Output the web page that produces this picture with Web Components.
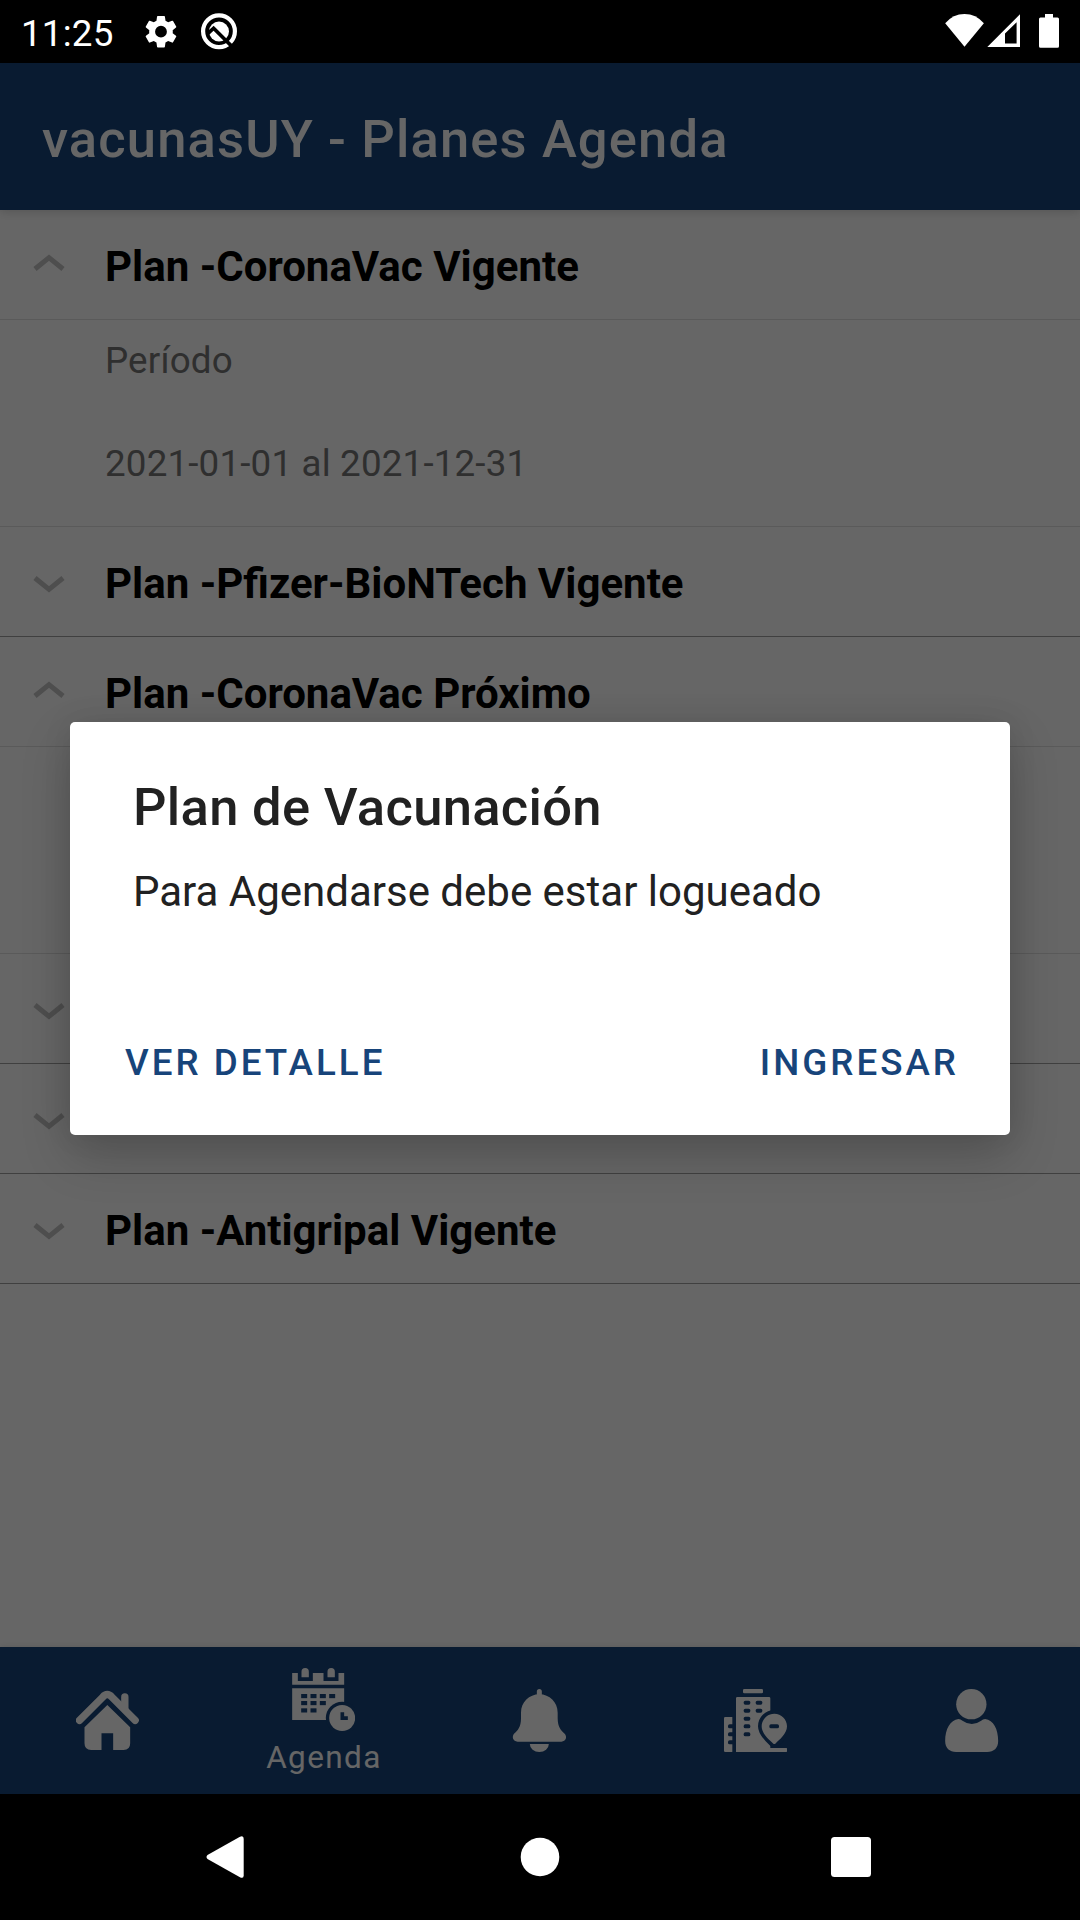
<!DOCTYPE html>
<html lang="es">
<head>
<meta charset="utf-8">
<title>vacunasUY</title>
<style>
  html, body { margin: 0; background: #000; }
  body { font-family: Roboto, "Liberation Sans", sans-serif; }
</style>
</head>
<body>
<app-shell>
  <status-bar slot="status">11:25</status-bar>
  <app-bar>vacunasUY - Planes Agenda</app-bar>
  <plan-list>
    <plan-group open><span slot="name">Plan -CoronaVac Vigente</span><span slot="label">Período</span><span slot="range">2021-01-01 al 2021-12-31</span></plan-group>
    <plan-group><span slot="name">Plan -Pfizer-BioNTech Vigente</span></plan-group>
    <plan-group open><span slot="name">Plan -CoronaVac Próximo</span></plan-group>
    <plan-group></plan-group>
    <plan-group><span slot="name">Plan -Pfizer-BioNTech Próximo</span></plan-group>
    <plan-group><span slot="name">Plan -Antigripal Vigente</span></plan-group>
  </plan-list>
  <tab-bar>
    <tab-item icon="home"></tab-item>
    <tab-item icon="agenda">Agenda</tab-item>
    <tab-item icon="bell"></tab-item>
    <tab-item icon="centers"></tab-item>
    <tab-item icon="user"></tab-item>
  </tab-bar>
  <modal-dialog slot="overlay">
    <span slot="title">Plan de Vacunación</span>
    <span slot="message">Para Agendarse debe estar logueado</span>
    <text-button slot="actions">VER DETALLE</text-button>
    <text-button slot="actions">INGRESAR</text-button>
  </modal-dialog>
  <system-nav slot="nav"></system-nav>
</app-shell>
<script>
const define = (name, html, setup) => {
  const tpl = document.createElement('template');
  tpl.innerHTML = html;
  customElements.define(name, class extends HTMLElement {
    constructor() {
      super();
      this.attachShadow({ mode: 'open' }).append(tpl.content.cloneNode(true));
    }
    connectedCallback() { if (setup) setup(this, this.shadowRoot); }
  });
};

define('app-shell', `
<style>
  :host { display: grid; grid-template-rows: 63px 1731px 126px; width: 1080px; height: 1920px; overflow: hidden; }
  main { position: relative; display: flex; flex-direction: column; background: #fff; overflow: hidden; }
  .scrim { position: absolute; inset: 0; z-index: 5; display: flex; align-items: center; justify-content: center; background: rgba(0,0,0,.6); }
</style>
<slot name="status"></slot>
<main><slot></slot><div class="scrim"><slot name="overlay"></slot></div></main>
<slot name="nav"></slot>`);

define('status-bar', `
<style>
  :host { display: flex; align-items: center; box-sizing: border-box; padding: 0 21px 0 21px; background: #000; color: #fff; font-size: 36.75px; }
  .time { padding-top: 3px; width: 120px; white-space: nowrap; letter-spacing: .2px; }
  svg { display: block; flex: none; }
  .right { margin-left: auto; }
</style>
<span class="time"><slot></slot></span>
<svg width="100" height="63" viewBox="141 0 100 63">
  <path transform="translate(141.3 12) scale(1.64)" fill="#fff" d="M19.14 12.94c.04-.3.06-.61.06-.94 0-.32-.02-.64-.07-.94l2.03-1.58a.49.49 0 0 0 .12-.61l-1.92-3.32a.49.49 0 0 0-.59-.22l-2.39.96c-.5-.38-1.03-.7-1.62-.94l-.36-2.54a.48.48 0 0 0-.48-.41h-3.84a.48.48 0 0 0-.47.41l-.36 2.54c-.59.24-1.13.57-1.62.94l-2.39-.96a.48.48 0 0 0-.59.22L2.74 8.87a.47.47 0 0 0 .12.61l2.03 1.58c-.05.3-.09.63-.09.94s.02.64.07.94l-2.03 1.58a.49.49 0 0 0-.12.61l1.92 3.32c.12.22.37.29.59.22l2.39-.96c.5.38 1.03.7 1.62.94l.36 2.54c.05.24.24.41.48.41h3.84c.24 0 .44-.17.47-.41l.36-2.54c.59-.24 1.13-.56 1.62-.94l2.39.96c.22.08.47 0 .59-.22l1.92-3.32a.47.47 0 0 0-.12-.61l-2.01-1.58zM12 15.6A3.6 3.6 0 1 1 12 8.4a3.6 3.6 0 0 1 0 7.2z"/>
  <circle cx="219" cy="31.3" r="15.9" fill="none" stroke="#fff" stroke-width="4.2"/>
  <circle cx="219" cy="31.5" r="10" fill="#fff"/>
  <path d="M207.500 33.800L213.600 28.200L231 45.500" fill="none" stroke="#000" stroke-width="3.600"/>
  <path d="M227 41.500L235 49.500" stroke="#000" stroke-width="3"/>
</svg>
<svg class="right" width="117" height="63" viewBox="942 0 117 63" fill="#fff">
  <path d="M945.2 23.3Q953 14 964.5 14Q976 14 983.9 23.3L964.5 46.8Z"/>
  <path fill-rule="evenodd" d="M1020 14.3V47H987.3ZM1016.6 22.2L1005 33.6V43.6H1016.6Z"/>
  <path d="M1045 14H1053V17.6H1057.5Q1059 17.6 1059 19.1V46.3Q1059 47.8 1057.5 47.8H1040.5Q1039 47.8 1039 46.3V19.1Q1039 17.6 1040.5 17.6H1045Z"/>
</svg>`);

define('app-bar', `
<style>
  :host { display: flex; align-items: center; box-sizing: border-box; flex: none; height: 147px; padding: 4px 42px 0; background: #17447a; color: #fff; font-size: 52.5px; font-weight: 500; letter-spacing: 1.15px; white-space: nowrap; box-shadow: 0 2px 9px rgba(0,0,0,.16); z-index: 1; }
</style><slot></slot>`);

define('plan-list', `<style>:host { display: flex; flex-direction: column; flex: 1; }</style><slot></slot>`);

define('plan-group', `
<style>
  :host { display: block; }
  .head { display: flex; align-items: center; height: 109px; border-bottom: 1px solid #a0a0a0; }
  :host([open]) .head { border-color: #e2e2e2; }
  svg { display: block; flex: none; width: 32px; height: 17px; margin: 5px 40px 0 33px; }
  :host([open]) svg { transform: scaleY(-1); margin-top: -5px; }
  .name { padding-top: 4px; color: #000; font-size: 42px; font-weight: 700; white-space: nowrap; }
  .body { display: none; box-sizing: border-box; height: 207px; padding: 19px 0 0 105px; border-bottom: 1px solid #e2e2e2; color: #757575; font-size: 36.75px; line-height: 43px; letter-spacing: .17px; }
  :host([open]) .body { display: flex; flex-direction: column; gap: 60px; }
</style>
<div class="head">
  <svg viewBox="0 0 32 17"><path d="M2 2L16 13.400L30 2" fill="none" stroke="#c2c2c2" stroke-width="5"/></svg>
  <div class="name"><slot name="name"></slot></div>
</div>
<div class="body"><slot name="label"></slot><slot name="range"></slot></div>`);

define('tab-bar', `
<style>:host { display: grid; grid-template-columns: repeat(5, 1fr); flex: none; height: 147px; background: #17447a; box-shadow: 0 0 6px rgba(0,0,0,.12); }</style>
<slot></slot>`);

const hole = (x, y, w = 20, h = 12) => `<rect x="${x}" y="${y}" width="${w}" height="${h}" rx="5" fill="#17447a"/>`;
const cell = (x, y) => `<rect x="${x}" y="${y}" width="18" height="12.5" fill="#17447a"/>`;
const icons = {
  home: ['108.5 177 189 189', `
    <path d="M119 271L189 201Q202 186 216 201L286 271" fill="none" stroke="#fff" stroke-width="22" stroke-linecap="round"/>
    <path d="M244 228V201A11 11 0 0 1 266 201V240Z"/>
    <path d="M202.5 225L271 292V340Q271 360 251 360H220V310H185V360H154Q134 360 134 340V292Z"/>`],
  agenda: ['755.5 114 189 189', `
    <path d="M756 129H773V153H818V129H850V153H895V129H912V164H756Z"/>
    <path d="M784 142V125A11 11 0 0 1 806 125V142ZM862 142V125A11 11 0 0 1 884 125V142Z"/>
    <path d="M756 175H912V270H756Z"/>` +
    [783, 811, 839, 867].map(x => cell(x, 192)).join('') +
    [783, 811, 839].map(x => cell(x, 213)).join('') +
    [783, 811].map(x => cell(x, 235)).join('') +
    `<circle cx="906" cy="264" r="49" fill="#17447a"/><circle cx="906" cy="264" r="39"/>
    <path d="M901 247H912V259H923V270H901Z" fill="#17447a"/>`],
  bell: ['84.5 147 189 189', `
    <path d="M171 170V154.500A7.500 7.500 0 0 1 186 154.500V170Z"/>
    <path d="M178.500 163C148 163 123.500 187 123.500 218V235C123.500 262 113 272 104 280C94 290 100 305 113 305H245C258 305 264 290 253 280C244 272 233.500 262 233.500 235V218C233.500 187 209 163 178.500 163Z"/>
    <path d="M150 312H207A28.500 24 0 0 1 150 312Z"/>`],
  centers: ['732 147 189 189', `
    <rect x="789" y="147" width="60" height="13" rx="4"/>
    <path d="M772 171H867Q871 171 871 175V324H917Q921 324 921 328V332Q921 336 917 336H768V175Q768 171 772 171Z"/>
    <path d="M736 231H757V336H736Q732 336 732 332V235Q732 231 736 231Z"/>` +
    [182, 206, 230, 253, 277].map(y => hole(791, y)).join('') +
    hole(827, 182) + hole(827, 206) +
    [253, 277, 301].map(y => hole(744, y)).join('') + `
    <path d="M883 221C862 221 845 238 845 259C845 281 868 300 880 311Q883 313 886 311C898 300 921 281 921 259C921 238 904 221 883 221Z" fill="none" stroke="#17447a" stroke-width="22"/>
    <path d="M883 221C862 221 845 238 845 259C845 281 868 300 880 311Q883 313 886 311C898 300 921 281 921 259C921 238 904 221 883 221Z"/>
    <path d="M871 324H917Q921 324 921 328V332Q921 336 917 336H871Z"/>` + hole(868, 253, 29)],
  user: ['119.5 177 189 189', `
    <circle cx="213.500" cy="222.500" r="45.500"/>
    <path d="M175 267C150 270 135 297 135 333C135 354 148 366 168 366H261C281 366 294 354 294 333C294 297 280 270 255 267Q248 267 243 272Q215 292 187 272Q181 267 175 267Z"/>`]
};

define('tab-item', `
<style>
  :host { display: flex; flex-direction: column; align-items: center; justify-content: center; color: #fff; font-size: 31.5px; letter-spacing: 1.4px; line-height: 37px; }
  svg { display: block; width: 63px; height: 63px; margin-right: 1px; fill: #fff; }
  :host([icon="agenda"]) { justify-content: flex-start; padding-top: 21px; gap: 8px; }
</style>
<svg></svg><slot></slot>`, (el, root) => {
  const [box, shapes] = icons[el.getAttribute('icon')];
  const svg = root.querySelector('svg');
  svg.setAttribute('viewBox', box);
  svg.innerHTML = shapes;
});

define('modal-dialog', `
<style>
  :host { display: flex; flex-direction: column; box-sizing: border-box; width: 940px; height: 413px; padding: 55px 51px 0 55px; border-radius: 5px; background: #fff; color: #212121; box-shadow: 0 20px 50px rgba(0,0,0,.2), 0 0 30px rgba(0,0,0,.08); white-space: nowrap; }
  .title { padding-left: 8px; font-size: 52.5px; font-weight: 500; line-height: 60px; letter-spacing: .32px; }
  .message { margin-top: 30px; padding-left: 8px; font-size: 42px; line-height: 50px; }
  .actions { display: flex; justify-content: space-between; margin-top: 124px; }
</style>
<div class="title"><slot name="title"></slot></div>
<div class="message"><slot name="message"></slot></div>
<div class="actions"><slot name="actions"></slot></div>`);

define('text-button', `
<style>:host { display: block; color: #17447a; font-size: 36.75px; font-weight: 500; line-height: 43px; letter-spacing: 3px; }</style><slot></slot>`);

define('system-nav', `
<style>:host { display: block; background: #000; } svg { display: block; }</style>
<svg width="1080" height="126" viewBox="0 1794 1080 126" fill="#fff">
  <path d="M207.500 1855L239.500 1837Q243.700 1834.700 243.700 1839V1875.500Q243.700 1879.300 239.500 1877L207.500 1859Q205.500 1857 207.500 1855Z"/>
  <circle cx="540" cy="1857" r="19.300"/>
  <rect x="831" y="1837" width="40" height="40" rx="3.500"/>
</svg>`);
</script>
</body>
</html>
